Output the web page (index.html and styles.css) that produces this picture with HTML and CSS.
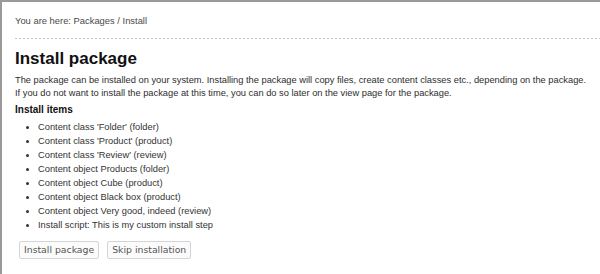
FILE: index.html
```html
<!DOCTYPE html>
<html>
<head>
<meta charset="utf-8">
<link rel="stylesheet" href="styles.css">
</head>
<body>
<div class="frame">
  <div class="breadcrumb">You are here: Packages / Install</div>
  <div class="rule"></div>
  <h1 class="title">Install package</h1>
  <p class="intro">The package can be installed on your system. Installing the package will copy files, create content classes etc., depending on the package.<br>If you do not want to install the package at this time, you can do so later on the view page for the package.</p>
  <h3 class="subtitle">Install items</h3>
  <ul class="items">
    <li>Content class 'Folder' (folder)</li>
    <li>Content class 'Product' (product)</li>
    <li>Content class 'Review' (review)</li>
    <li>Content object Products (folder)</li>
    <li>Content object Cube (product)</li>
    <li>Content object Black box (product)</li>
    <li>Content object Very good, indeed (review)</li>
    <li>Install script: This is my custom install step</li>
  </ul>
  <div class="actions">
    <button class="btn" type="button">Install package</button>
    <button class="btn" type="button">Skip installation</button>
  </div>
</div>
</body>
</html>
```
FILE: styles.css
```css
html, body {
  margin: 0;
  padding: 0;
  background: #ffffff;
}

body {
  font-family: "Liberation Sans", Arial, sans-serif;
  color: #333333;
  font-size: 9.3px;
  line-height: 13px;
}

.frame {
  border-top: 2px solid #9a9a9a;
  border-left: 2px solid #9a9a9a;
  padding: 12px 0 20px 13px;
  height: 240px;
}

.breadcrumb {
  color: #4a4a4a;
  font-size: 9.4px;
  line-height: 13px;
}

.rule {
  margin-top: 11px;
  height: 1px;
  background-image: repeating-linear-gradient(to right, #c4c4c4 0 2px, transparent 2px 4px);
}

.title {
  margin: 10px 0 0;
  font-size: 17px;
  line-height: 20px;
  font-weight: bold;
  color: #111111;
}

.intro {
  margin: 5px 0 0;
  color: #2e2e2e;
}

.subtitle {
  margin: 3px 0 0;
  font-size: 10px;
  line-height: 13px;
  font-weight: bold;
  color: #111111;
}

.items {
  margin: 4px 0 0;
  padding-left: 23px;
  list-style: disc;
}

.items li {
  line-height: 14px;
  color: #333333;
}

.actions {
  display: flex;
  gap: 8px;
  margin: 9px 0 0 4px;
}

.btn {
  font-family: "DejaVu Sans", Verdana, sans-serif;
  font-size: 9.3px;
  color: #555555;
  background: #fbfbfb;
  border: 1px solid #d4d4d4;
  border-radius: 2px;
  height: 18px;
  padding: 0 4px;
  line-height: 16px;
}
```
